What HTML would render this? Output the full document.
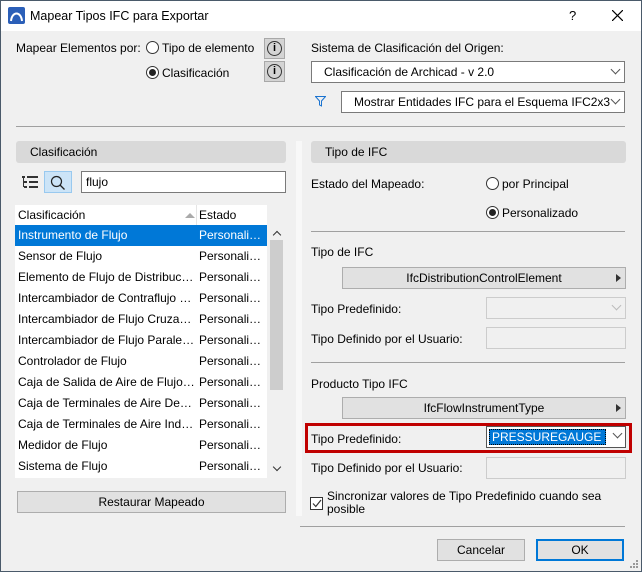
<!DOCTYPE html>
<html><head><meta charset="utf-8">
<style>
*{box-sizing:border-box;margin:0;padding:0}
body{width:642px;height:572px;overflow:hidden;background:#f0f0f0;font-family:"Liberation Sans",sans-serif;font-size:12px;color:#000;position:relative}
.a{position:absolute;white-space:nowrap}
.frame{position:absolute;left:0;top:0;width:642px;height:572px;border:1px solid #4a5a6a;pointer-events:none}
.title{position:absolute;left:0;top:0;width:642px;height:31px;background:#fff}
.radio{position:absolute;width:13px;height:13px;border:1px solid #333;border-radius:50%;background:#fff}
.radio.on::after{content:"";position:absolute;left:2px;top:2px;width:7px;height:7px;border-radius:50%;background:#222}
.info{position:absolute;width:21px;height:21px;background:#d4d4d4;border:1px solid #a8a8a8}
.info::after{content:"i";position:absolute;left:2px;top:2px;width:15px;height:15px;border:1.5px solid #333;border-radius:50%;text-align:center;font-size:11px;line-height:13px;font-weight:bold;box-sizing:border-box}
.dd{position:absolute;height:22px;background:#fff;border:1px solid #7a7a7a;padding-left:12px;line-height:20px;overflow:hidden}
.chev{position:absolute;right:5px;width:7px;height:7px;border-right:1px solid #555;border-bottom:1px solid #555;transform:rotate(45deg);top:4px}
.hdr{position:absolute;height:22px;background:#d9d9d9;border-radius:3px;line-height:22px;padding-left:14px}
.hr{position:absolute;height:1px;background:#a0a0a0}
.btn{position:absolute;height:22px;background:#e1e1e1;border:1px solid #adadad;text-align:center;line-height:20px}
.tri{position:absolute;right:4px;top:6px;width:0;height:0;border-left:5px solid #333;border-top:4px solid transparent;border-bottom:4px solid transparent}
.box{position:absolute;height:22px;background:#f0f0f0;border:1px solid #ccc}
.row{position:absolute;left:15px;width:252px;height:21px;line-height:21px}
.row span{position:absolute;top:0;overflow:hidden;text-overflow:ellipsis;white-space:nowrap}
.row span:first-child{left:3px;width:178px}
.row span:last-child{left:184px;width:67px}
</style></head><body>
<div class="title"></div>
<svg class="a" style="left:8px;top:7px" width="17" height="17" viewBox="0 0 17 17"><rect width="17" height="17" rx="2" fill="#2b5fb8"/><path d="M3 14 C4 4 13 4 14 14" stroke="#fff" stroke-width="2" fill="none"/></svg>
<div class="a" style="left:30px;top:9px;font-size:12.5px">Mapear Tipos IFC para Exportar</div>
<div class="a" style="left:569px;top:8px;font-size:13px">?</div>
<svg class="a" style="left:612px;top:10px" width="11" height="11"><path d="M0 0L11 11M11 0L0 11" stroke="#000" stroke-width="1.2"/></svg>

<div class="a" style="left:16px;top:41px">Mapear Elementos por:</div>
<div class="radio" style="left:146px;top:41px"></div>
<div class="a" style="left:162px;top:41px">Tipo de elemento</div>
<div class="info" style="left:264px;top:38px"></div>
<div class="radio on" style="left:146px;top:66px"></div>
<div class="a" style="left:162px;top:66px">Clasificación</div>
<div class="info" style="left:264px;top:61px"></div>

<div class="a" style="left:311px;top:41px">Sistema de Clasificación del Origen:</div>
<div class="dd" style="left:311px;top:61px;width:314px">Clasificación de Archicad - v 2.0<div class="chev"></div></div>
<svg class="a" style="left:315px;top:96px" width="11" height="11"><path d="M0.5 0.5H10.5L6.5 5V10L4.5 9V5Z" stroke="#1a73d0" fill="none"/></svg>
<div class="dd" style="left:341px;top:91px;width:284px">Mostrar Entidades IFC para el Esquema IFC2x3<div class="chev" style="background:#fff"></div></div>
<div class="hr" style="left:16px;top:126px;width:609px"></div>

<div class="hdr" style="left:16px;top:141px;width:270px">Clasificación</div>
<div class="a" style="left:296px;top:141px;width:6px;height:375px;background:#f8f8f8"></div>
<svg class="a" style="left:22px;top:175px" width="16" height="14"><g fill="#333"><rect x="0" y="1" width="3" height="2"/><rect x="5" y="1" width="11" height="2"/><rect x="2" y="6" width="3" height="2"/><rect x="7" y="6" width="9" height="2"/><rect x="2" y="11" width="3" height="2"/><rect x="7" y="11" width="9" height="2"/><rect x="1" y="3" width="1" height="9"/></g></svg>
<div class="a" style="left:44px;top:171px;width:28px;height:22px;background:#cce4f7;border:1px solid #99c9ef"></div>
<svg class="a" style="left:50px;top:175px" width="16" height="15"><circle cx="6.5" cy="6.5" r="5" stroke="#222" fill="none" stroke-width="1.2"/><path d="M10 10L14.5 14.5" stroke="#222" stroke-width="1.3"/></svg>
<div class="a" style="left:81px;top:171px;width:205px;height:22px;background:#fff;border:1px solid #7a7a7a;padding-left:4px;line-height:20px">flujo</div>

<div class="a" style="left:15px;top:205px;width:252px;height:20px;background:#fff"></div>
<div class="a" style="left:18px;top:208px">Clasificación</div>
<div class="a" style="left:185px;top:213px;width:0;height:0;border-left:5px solid transparent;border-right:5px solid transparent;border-bottom:5px solid #aaa"></div>
<div class="a" style="left:196px;top:205px;width:1px;height:20px;background:#e5e5e5"></div>
<div class="a" style="left:199px;top:208px">Estado</div>
<div class="a" style="left:15px;top:225px;width:252px;height:253px;background:#fff"></div>
<div class="a" style="left:268px;top:225px;width:17px;height:253px;background:#f0f0f0"></div>
<div class="a" style="left:270px;top:240px;width:13px;height:150px;background:#cdcdcd"></div>
<div class="a" style="left:274px;top:232px;width:6px;height:6px;border-left:1.5px solid #333;border-top:1.5px solid #333;transform:rotate(45deg)"></div>
<div class="a" style="left:274px;top:464px;width:6px;height:6px;border-right:1.5px solid #333;border-bottom:1.5px solid #333;transform:rotate(45deg)"></div>

<div class="row" style="top:225px;background:#0078d7;color:#fff"><span>Instrumento de Flujo</span><span>Personaliza...</span></div>
<div class="row" style="top:246px"><span>Sensor de Flujo</span><span>Personaliza...</span></div>
<div class="row" style="top:267px"><span>Elemento de Flujo de Distribución</span><span>Personaliza...</span></div>
<div class="row" style="top:288px"><span>Intercambiador de Contraflujo de Aire</span><span>Personaliza...</span></div>
<div class="row" style="top:309px"><span>Intercambiador de Flujo Cruzado de Aire</span><span>Personaliza...</span></div>
<div class="row" style="top:330px"><span>Intercambiador de Flujo Paralelo de Aire</span><span>Personaliza...</span></div>
<div class="row" style="top:351px"><span>Controlador de Flujo</span><span>Personaliza...</span></div>
<div class="row" style="top:372px"><span>Caja de Salida de Aire de Flujo Constante</span><span>Personaliza...</span></div>
<div class="row" style="top:393px"><span>Caja de Terminales de Aire Dependiente</span><span>Personaliza...</span></div>
<div class="row" style="top:414px"><span>Caja de Terminales de Aire Independiente</span><span>Personaliza...</span></div>
<div class="row" style="top:435px"><span>Medidor de Flujo</span><span>Personaliza...</span></div>
<div class="row" style="top:456px"><span>Sistema de Flujo</span><span>Personaliza...</span></div>

<div class="btn" style="left:17px;top:491px;width:269px">Restaurar Mapeado</div>

<div class="hdr" style="left:311px;top:141px;width:315px">Tipo de IFC</div>
<div class="a" style="left:311px;top:177px">Estado del Mapeado:</div>
<div class="radio" style="left:486px;top:177px"></div>
<div class="a" style="left:502px;top:177px">por Principal</div>
<div class="radio on" style="left:486px;top:206px"></div>
<div class="a" style="left:502px;top:206px">Personalizado</div>
<div class="hr" style="left:311px;top:231px;width:314px"></div>
<div class="a" style="left:311px;top:245px">Tipo de IFC</div>
<div class="btn" style="left:342px;top:267px;width:284px">IfcDistributionControlElement<div class="tri"></div></div>
<div class="a" style="left:311px;top:302px">Tipo Predefinido:</div>
<div class="box" style="left:486px;top:297px;width:140px;background:#f0f0f0"><div class="chev" style="border-color:#bbb"></div></div>
<div class="a" style="left:311px;top:332px">Tipo Definido por el Usuario:</div>
<div class="box" style="left:486px;top:327px;width:140px"></div>
<div class="hr" style="left:311px;top:362px;width:314px"></div>
<div class="a" style="left:311px;top:377px">Producto Tipo IFC</div>
<div class="btn" style="left:342px;top:397px;width:284px">IfcFlowInstrumentType<div class="tri"></div></div>
<div class="a" style="left:305px;top:423px;width:327px;height:30px;border:3px solid #c00000"></div>
<div class="a" style="left:311px;top:432px">Tipo Predefinido:</div>
<div class="a" style="left:486px;top:426px;width:140px;height:22px;background:#fff;border:1px solid #555"></div>
<div class="a" style="left:489px;top:429px;width:117px;height:16px;background:#0078d7;border:1px dotted #000;color:#fff;line-height:14px;padding-left:2px">PRESSUREGAUGE</div>
<div class="chev" style="left:614px;top:430px;right:auto"></div>
<div class="a" style="left:311px;top:461px">Tipo Definido por el Usuario:</div>
<div class="box" style="left:486px;top:457px;width:140px"></div>
<div class="a" style="left:310px;top:497px;width:13px;height:13px;background:#fff;border:1px solid #333"></div>
<svg class="a" style="left:312px;top:499px" width="10" height="9"><path d="M1 4.5L3.8 7.5L9 1" stroke="#333" stroke-width="1.2" fill="none"/></svg>
<div class="a" style="left:327px;top:490px;line-height:13px">Sincronizar valores de Tipo Predefinido cuando sea<br>posible</div>
<div class="hr" style="left:300px;top:526px;width:325px"></div>
<div class="btn" style="left:437px;top:539px;width:88px">Cancelar</div>
<div class="btn" style="left:536px;top:539px;width:88px;border:2px solid #0078d7;line-height:18px">OK</div>
<svg class="a" style="left:629px;top:559px" width="10" height="10"><g fill="#999"><rect x="7" y="1" width="2" height="2"/><rect x="4" y="4" width="2" height="2"/><rect x="7" y="4" width="2" height="2"/><rect x="1" y="7" width="2" height="2"/><rect x="4" y="7" width="2" height="2"/><rect x="7" y="7" width="2" height="2"/></g></svg>
<div class="frame"></div>
</body></html>
